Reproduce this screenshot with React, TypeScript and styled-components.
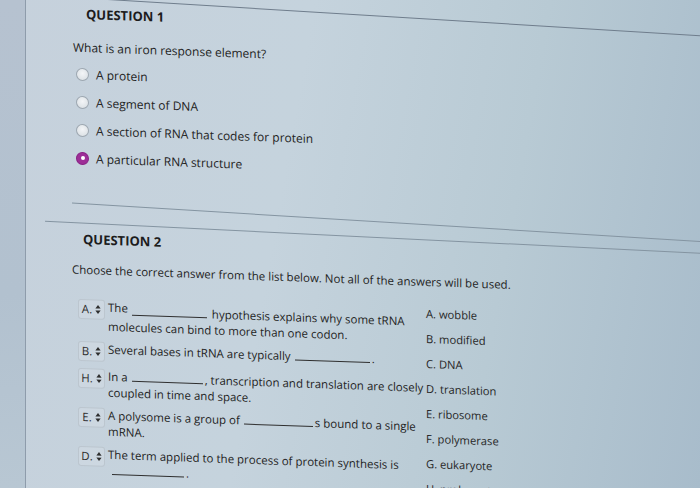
import React from "react";
import styled, { createGlobalStyle, css } from "styled-components";

const GlobalStyle = createGlobalStyle`
  html, body {
    margin: 0;
    padding: 0;
    width: 700px;
    height: 488px;
    overflow: hidden;
  }
  body {
    font-family: "Open Sans", "Liberation Sans", sans-serif;
    color: #232323;
    -webkit-font-smoothing: antialiased;
  }
`;

const Page = styled.div`
  display: flex;
  width: 700px;
  height: 488px;
  overflow: hidden;
  background: linear-gradient(100deg, #c6d1dc 0%, #c5d3dd 40%, #b8cad4 70%, #a8bccb 100%);
`;

const Rail = styled.div`
  flex: none;
  width: 25px;
  background: linear-gradient(180deg, #b6c2d0 0%, #b2c1cf 60%, #b8c7d3 100%);
  border-right: 1px solid #8e9cab;
`;

const Main = styled.div`
  flex: 1;
  min-width: 0;
  overflow: hidden;
`;

const Sheet = styled.div`
  display: flex;
  flex-direction: column;
  align-items: flex-start;
  transform: skewY(2deg);
  transform-origin: 0 0;
`;

const Rule = styled.div<{ $top: number; $indent: number; $tilt: number; $tone: string }>`
  align-self: stretch;
  height: 1px;
  margin: ${(p) => p.$top}px -60px 0 ${(p) => p.$indent}px;
  background: ${(p) => p.$tone};
  transform: rotate(${(p) => p.$tilt}deg);
  transform-origin: left center;
`;

const Heading = styled.h2<{ $top: number; $indent: number }>`
  margin: ${(p) => p.$top}px 0 0 ${(p) => p.$indent}px;
  font-size: 13px;
  line-height: 18px;
  font-weight: 700;
  color: #1c1c1c;
`;

const Prompt = styled.p<{ $top: number; $indent: number; $size: number }>`
  margin: ${(p) => p.$top}px 0 0 ${(p) => p.$indent}px;
  font-size: ${(p) => p.$size}px;
  line-height: 18px;
  white-space: nowrap;
`;

const OptionList = styled.div`
  display: flex;
  flex-direction: column;
  margin: 3.5px 0 0 50px;
`;

const OptionRow = styled.label`
  display: flex;
  align-items: center;
  gap: 7px;
  height: 28px;
  font-size: 12px;
  white-space: nowrap;
`;

const RadioDot = styled.span<{ $checked?: boolean }>`
  flex: none;
  width: 13px;
  height: 13px;
  box-sizing: border-box;
  border-radius: 50%;
  display: flex;
  align-items: center;
  justify-content: center;
  ${(p) =>
    p.$checked
      ? css`
          background: #9d2e97;
          border: 1px solid #8a2386;
          &::after {
            content: "";
            width: 4px;
            height: 4px;
            border-radius: 50%;
            background: #ffffff;
          }
        `
      : css`
          background: radial-gradient(circle at 50% 40%, #f3f5f7 0%, #dfe4e8 70%, #d0d7dd 100%);
          border: 1px solid #9ea8b1;
        `}
`;

const MatchGrid = styled.div`
  display: grid;
  grid-template-columns: 348px auto;
  align-items: start;
  margin: 10px 0 0 52px;
`;

const RowsColumn = styled.div`
  display: flex;
  flex-direction: column;
  gap: 5px;
  padding-top: 8px;
`;

const MatchRow = styled.div`
  display: flex;
  align-items: flex-start;
  gap: 3px;
`;

const SelectBox = styled.div`
  flex: none;
  width: 27px;
  height: 20px;
  margin-top: 2px;
  box-sizing: border-box;
  border: 1px solid #bcc6cf;
  border-radius: 3px;
  background: rgba(255, 255, 255, 0.12);
  display: flex;
  align-items: center;
  justify-content: center;
  gap: 3px;
  font-size: 11.5px;
  color: #2c2c2c;
`;

const RowText = styled.div`
  font-size: 11.5px;
  line-height: 16px;
  padding-top: 2px;
  white-space: nowrap;
`;

const Raised = styled.span`
  vertical-align: 3px;
`;

const Blank = styled.span<{ $w: number }>`
  display: inline-block;
  width: ${(p) => p.$w}px;
  height: 11px;
  margin: 0 2px 0 4px;
  border-bottom: 1px solid #2f2f2f;
  vertical-align: baseline;
`;

const AnswerList = styled.ul`
  list-style: none;
  margin: 0;
  padding: 0;
  display: flex;
  flex-direction: column;
  font-size: 11.2px;
  line-height: 25px;
  color: #262626;
  white-space: nowrap;
`;

const SortIcon = () => (
  <svg width="6" height="10" viewBox="0 0 6 10" aria-hidden="true">
    <path d="M3 0.5 L5.6 4 L0.4 4 Z" fill="#2e2e2e" />
    <path d="M3 9.5 L5.6 6 L0.4 6 Z" fill="#2e2e2e" />
  </svg>
);

const Select = ({ letter }: { letter: string }) => (
  <SelectBox>
    <span>{letter}.</span>
    <SortIcon />
  </SelectBox>
);

const options = [
  { text: "A protein", checked: false },
  { text: "A segment of DNA", checked: false },
  { text: "A section of RNA that codes for protein", checked: false },
  { text: "A particular RNA structure", checked: true },
];

const answers = [
  "A. wobble",
  "B. modified",
  "C. DNA",
  "D. translation",
  "E. ribosome",
  "F. polymerase",
  "G. eukaryote",
  "H. prokaryote",
];

export default function App() {
  return (
    <>
      <GlobalStyle />
      <Page>
        <Rail />
        <Main>
          <Sheet>
            <Rule $top={-6} $indent={0} $tilt={1.5} $tone="#6f7d8c" />
            <Heading $top={8} $indent={60}>QUESTION 1</Heading>
            <Prompt $top={15.5} $indent={47} $size={12}>What is an iron response element?</Prompt>
            <OptionList>
              {options.map((o) => (
                <OptionRow key={o.text}>
                  <RadioDot $checked={o.checked} />
                  <span>{o.text}</span>
                </OptionRow>
              ))}
            </OptionList>

            <Rule $top={30.5} $indent={46} $tilt={1.5} $tone="#8494a1" />
            <Rule $top={18} $indent={19} $tilt={0.8} $tone="#8494a1" />

            <Heading $top={7.5} $indent={57}>QUESTION 2</Heading>
            <Prompt $top={12.5} $indent={46} $size={11.5}>
              Choose the correct answer from the list below. Not all of the answers will be used.
            </Prompt>

            <MatchGrid>
              <RowsColumn>
                <MatchRow>
                  <Select letter="A" />
                  <RowText>
                    <Raised>The</Raised>
                    <Blank $w={75} /> hypothesis explains why some tRNA
                    <br />
                    molecules can bind to more than one codon.
                  </RowText>
                </MatchRow>
                <MatchRow>
                  <Select letter="B" />
                  <RowText>
                    Several bases in tRNA are typically
                    <Blank $w={75} />.
                  </RowText>
                </MatchRow>
                <MatchRow>
                  <Select letter="H" />
                  <RowText>
                    In a<Blank $w={71} />, transcription and translation are closely
                    <br />
                    coupled in time and space.
                  </RowText>
                </MatchRow>
                <MatchRow>
                  <Select letter="E" />
                  <RowText>
                    A polysome is a group of<Blank $w={69} />s bound to a single
                    <br />
                    mRNA.
                  </RowText>
                </MatchRow>
                <MatchRow>
                  <Select letter="D" />
                  <RowText>
                    The term applied to the process of protein synthesis is
                    <br />
                    <Blank $w={72} />.
                  </RowText>
                </MatchRow>
              </RowsColumn>
              <AnswerList>
                {answers.map((a) => (
                  <li key={a}>{a}</li>
                ))}
              </AnswerList>
            </MatchGrid>
          </Sheet>
        </Main>
      </Page>
    </>
  );
}
